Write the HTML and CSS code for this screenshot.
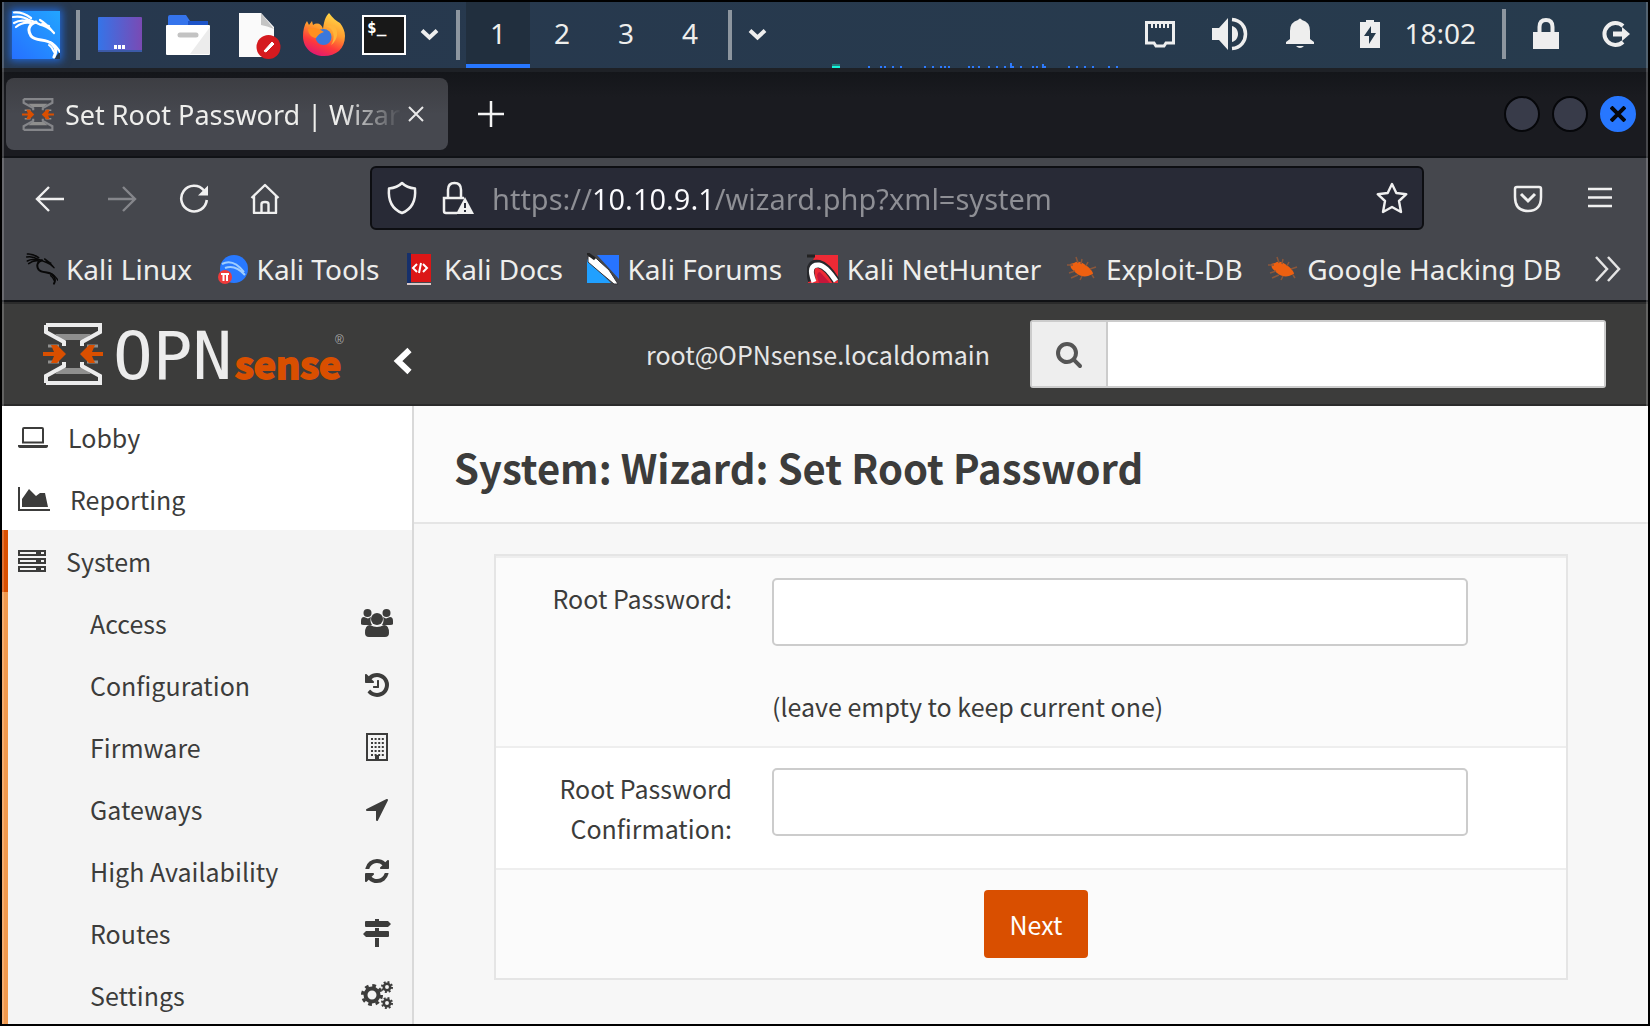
FILE: index.html
```html
<!DOCTYPE html>
<html lang="en">
<head>
<meta charset="utf-8">
<meta name="viewport" content="width=device-width, initial-scale=1">
<title>Set Root Password | Wizard</title>
<link rel="stylesheet" href="styles.css">
</head>
<body>
<div class="screen">

  <!-- Shared symbols -->
  <svg class="defs" aria-hidden="true">
    <symbol id="dragon" viewBox="0 0 48 48">
      <g fill="none" stroke="currentColor" stroke-linecap="round" stroke-linejoin="round">
        <path d="M2 1.500C8 1 13 2.500 19 7M1 6C7 5 13 6 18 10M2 12C7 9 12 9 17 11M4 16C9 12 14 11 19 12" stroke-width="2.200"/>
        <path d="M17 9C22 10 26 13 31 14.500C35 16 39 18 42 22M28 9C33 12 37 16 41 21M30 13L37 15" stroke-width="2.200"/>
        <path d="M24 11C17 13 15 19 19 25C24 31 34 27 40 33C44 37 45 40 42 46" stroke-width="3"/>
        <path d="M38 31C42 33 45 36 48 41M37 34C40 36 41 38 42 41" stroke-width="2"/>
      </g>
    </symbol>
    <symbol id="hourglass" viewBox="0 0 60 62">
      <path d="M12 11H48L41 17H19ZM12 51H48L41 45H19Z" fill="#8f8f8e"/>
      <path d="M3 2H57V9L39 19V23M3 2V9L21 19V23M3 60H57V53L39 43V39M3 60V53L21 43V39" fill="none" stroke="currentColor" stroke-width="4"/>
      <path d="M5 23H16M44 23H55M5 39H16M44 39H55" stroke="#8f8f8e" stroke-width="3"/>
      <path d="M0 29H11L8 22H14L23 31L14 40H8L11 33H0ZM60 29H49L52 22H46L37 31L46 40H52L49 33H60Z" fill="#d94f00"/>
    </symbol>
    <symbol id="bug" viewBox="0 0 32 32">
      <path d="M4 11L8 10C12 7 17 10 21 13C25 16 27 19 27 21L22 23C15 25 9 20 5 15Z" fill="#ee6010"/>
      <path d="M1 12L7 12M10 4L12 10M16 6L15 11M3 20L9 18M5 25L12 22M14 27L16 23M22 9L20 13M30 14L24 16M26 22L28 25" stroke="#8a573b" stroke-width="1.500" fill="none"/>
    </symbol>
  </svg>

  <header class="panel">
    <button class="start" aria-label="Applications"><svg width="48" height="48" viewBox="0 0 48 48"><defs><linearGradient id="kg" x1="0" y1="1" x2="1" y2="0"><stop offset="0" stop-color="#2670ff"/><stop offset="1" stop-color="#22a5ff"/></linearGradient></defs><path d="M0 0H48V40L42 48H0Z" fill="url(#kg)"/><use href="#dragon" color="#fff" width="48" height="48"/></svg></button>
    <span class="divider"></span>
    <nav class="launchers" aria-label="Launchers">
      <button aria-label="Show desktop"><svg width="66" height="48" viewBox="0 0 66 48"><defs><linearGradient id="dg"><stop offset="0" stop-color="#3574e8"/><stop offset="1" stop-color="#7a4ab4"/></linearGradient></defs><rect x="10" y="6" width="44" height="35" rx="1" fill="url(#dg)"/><path d="M10 40H54" stroke="#3c5aa8" stroke-width="2"/><path d="M26 36H38" stroke="#fff" stroke-width="4" stroke-dasharray="3 1"/></svg></button>
      <button aria-label="Files"><svg width="66" height="48" viewBox="0 0 66 48"><path d="M14 6Q14 4 16 4H32L36 10H54V16H14Z" fill="#3574ec"/><path d="M34 10H54V14H34Z" fill="#1d54c8"/><rect x="12" y="14" width="44" height="30" rx="1" fill="#fff"/><path d="M36 43L56 16V43Z" fill="#ececec"/><path d="M26 24H42" stroke="#c3c3c3" stroke-width="5" stroke-linecap="round"/></svg></button>
      <button aria-label="Text editor"><svg width="66" height="48" viewBox="0 0 66 48"><path d="M19 2H41L54 16V46H19Z" fill="#fafafa"/><path d="M41 2L54 18Q47 15 41 14Z" fill="#c4c4c4"/><circle cx="48.500" cy="36" r="12" fill="#d51a1f"/><path d="M44 40L46 41L54 33L52 31Z" fill="#fff" stroke="#fff"/></svg></button>
      <button aria-label="Firefox"><svg width="66" height="48" viewBox="0 0 66 48"><defs><linearGradient id="ff" x1=".8" y1="0" x2=".4" y2="1"><stop offset="0" stop-color="#ffe04b"/><stop offset=".45" stop-color="#ff9a2e"/><stop offset=".75" stop-color="#ff3a3a"/><stop offset="1" stop-color="#e31b6d"/></linearGradient></defs><path d="M43 2C47 7 50 10 54 12C57 16 59 20 59 25C59 38 50 45 38 45C26 45 17 37 17 25C17 20 18 14 21 10L23 14L26 10L27 14C31 11 36 13 37 18C38 9 40 5 43 2Z" fill="url(#ff)"/><circle cx="37.500" cy="26" r="8" fill="#3a78dc"/><path d="M22 18C27 16 32 17 38 21C34 22 32 24 30 27C26 27 22 23 22 18Z" fill="#ff8f1f"/><path d="M40 15C48 17 50 27 45 34C52 29 53 20 48 14Z" fill="#ffb53a"/></svg></button>
      <button aria-label="Terminal"><svg width="66" height="48" viewBox="0 0 66 48"><rect x="11" y="5" width="42" height="38" fill="#181818" stroke="#fff" stroke-width="2"/><text x="15" y="22" class="prompt">$_</text></svg></button>
      <button aria-label="More launchers"><svg width="24" height="48" viewBox="0 0 24 48" fill="none" stroke="#eee" stroke-width="4"><path d="M4 19.500L11.500 26.500L19 19.500"/></svg></button>
    </nav>
    <span class="divider"></span>
    <nav class="workspaces" aria-label="Workspaces">
      <button class="active">1</button><button>2</button><button>3</button><button>4</button>
    </nav>
    <span class="divider"></span>
    <button class="more" aria-label="Window list"><svg width="24" height="48" viewBox="0 0 24 48" fill="none" stroke="#eee" stroke-width="4"><path d="M4 19.500L11.500 26.500L19 19.500"/></svg></button>
    <svg class="graph" width="288" height="10" viewBox="0 0 288 10" aria-hidden="true"><path d="M0 7H8" stroke="#24827f" stroke-width="2"/><path d="M0 9H8" stroke="#15f5dc" stroke-width="2"/><path d="M36 9H38M48 9H50M52 9H54M60 9H62M68 9H70M92 9H94M100 9H102M108 9H110M112 9H114M116 9H118M136 9H138M140 9H142M146 9H148M156 9H158M164 9H166M172 9H174M178 9H182M188 9H190M200 9H202M204 9H206M210 9H214M236 9H238M244 9H246M252 9H254M260 9H262M276 9H278M284 9H286M178 6H180M178 7H180M210 7H212" stroke="#2d7bff" stroke-width="2"/></svg>
    <div class="tray">
      <button aria-label="Network"><svg width="32" height="32" viewBox="0 0 32 32"><path d="M2.500 4.500H29.500V25H22L20 28H12L10 25H2.500Z" fill="none" stroke="#eee" stroke-width="3"/><path d="M8 6V10M12 6V10M16 6V10M20 6V10M24 6V10" stroke="#eee" stroke-width="2"/></svg></button>
      <button aria-label="Volume"><svg width="36" height="32" viewBox="0 0 36 32" fill="#eee"><path d="M0 10H7L16 0V32L7 22H0Z"/><path d="M20 8C28 10 28 22 20 24Z"/><path d="M20 1.500C38 3 38 29 20 30.500" fill="none" stroke="#eee" stroke-width="3.500"/></svg></button>
      <button aria-label="Notifications"><svg width="32" height="32" viewBox="0 0 32 32" fill="#eee"><path d="M14 2Q16-1 18 2Q26 4 26 13V21L30 24V26H2V24L6 21V13Q6 4 14 2ZM12 28H20Q16 32 12 28Z"/></svg></button>
      <button aria-label="Battery"><svg width="32" height="32" viewBox="0 0 32 32"><path d="M12 2H20V4H26V30H6V4H12Z" fill="#eee"/><path d="M17 8L10 18H15V26L22 15H17Z" fill="#263a4b"/></svg></button>
      <time class="clock">18:02</time>
      <span class="divider"></span>
      <button aria-label="Lock screen"><svg width="32" height="32" viewBox="0 0 32 32"><path d="M3 14H29V31H3Z" fill="#eee"/><path d="M9.500 15V9Q9.500 2 16 2T22.500 9V15" fill="none" stroke="#eee" stroke-width="4"/></svg></button>
      <button aria-label="Log out"><svg width="32" height="32" viewBox="0 0 32 32"><path d="M23 8A11 11 0 1 0 23 24" fill="none" stroke="#eee" stroke-width="4"/><path d="M13 13.500H22V9L30 16L22 23V18.500H13Z" fill="#eee"/></svg></button>
    </div>
  </header>

  <div class="tabbar">
    <div class="tab">
      <svg width="32" height="33" viewBox="0 0 60 62" color="#85868a" aria-hidden="true"><use href="#hourglass"/></svg>
      <span class="tab-title">Set Root Password | Wizard</span>
      <button aria-label="Close tab"><svg width="16" height="16" viewBox="0 0 16 16" stroke="#e8e8e8" stroke-width="2"><path d="M1 1L15 15M15 1L1 15"/></svg></button>
    </div>
    <button class="new-tab" aria-label="New tab"><svg width="26" height="26" viewBox="0 0 26 26" stroke="#f4f4f4" stroke-width="2.500"><path d="M13 0V26M0 13H26"/></svg></button>
    <div class="window-buttons">
      <button aria-label="Minimize"></button>
      <button aria-label="Maximize"></button>
      <button class="close" aria-label="Close"><svg width="16" height="16" viewBox="0 0 16 16" stroke="#05070c" stroke-width="4"><path d="M1 1L15 15M15 1L1 15"/></svg></button>
    </div>
  </div>

  <div class="toolbar">
    <button aria-label="Back"><svg width="32" height="32" viewBox="0 0 32 32" fill="none" stroke="#f0f0f0" stroke-width="2.400"><path d="M30 17H3M15 5L3 17L15 29"/></svg></button>
    <button aria-label="Forward" disabled><svg width="32" height="32" viewBox="0 0 32 32" fill="none" stroke="#85868b" stroke-width="2.400"><path d="M2 17H29M17 5L29 17L17 29"/></svg></button>
    <button aria-label="Reload"><svg width="32" height="32" viewBox="0 0 32 32"><path d="M26 8.500A12.800 12.800 0 1 0 28.800 18" fill="none" stroke="#f0f0f0" stroke-width="2.600"/><path d="M30 3.500V13.500H20Z" fill="#f0f0f0"/></svg></button>
    <button aria-label="Home"><svg width="32" height="32" viewBox="0 0 32 32" fill="none" stroke="#f0f0f0" stroke-width="2.400" stroke-linejoin="round"><path d="M1.500 16L15 3L28.500 16M4 14V31H26V14M11.500 31V22Q11.500 20 15 20T18.500 22V31"/></svg></button>
    <div class="urlbar">
      <svg width="32" height="34" viewBox="0 0 32 34" fill="none" stroke="#f0f0f0" stroke-width="2.500" stroke-linejoin="round" aria-hidden="true"><path d="M16 2C20 6 24 7 29 7.500C30 19 26 28 16 32C6 28 2 19 3 7.500C8 7 12 6 16 2Z"/></svg>
      <svg width="32" height="34" viewBox="0 0 32 34" aria-hidden="true"><path d="M15 32H4Q2 32 2 30V17H22M6 17V9Q6 2 12.500 2T19 9V17" fill="none" stroke="#f0f0f0" stroke-width="2.500"/><path d="M23 16L32 33H14Z" fill="#f0f0f0"/><path d="M23 22V27M23 29V31" stroke="#282a36" stroke-width="2"/></svg>
      <input class="url" type="text" aria-label="Address" value="https://10.10.9.1/wizard.php?xml=system">
      <button aria-label="Bookmark this page"><svg width="32" height="32" viewBox="0 0 32 32" fill="none" stroke="#f0f0f0" stroke-width="2.400" stroke-linejoin="round"><path d="M16 2L20.300 11L30.300 12.200L23 19L25 30L16 25L7 30L9 19L1.700 12.200L11.700 11Z"/></svg></button>
    </div>
    <div class="tools">
      <button aria-label="Pocket"><svg width="32" height="32" viewBox="0 0 32 32" fill="none" stroke="#f0f0f0" stroke-width="2.500"><path d="M5 5H27Q29 5 29 7V15Q29 29 16 29T3 15V7Q3 5 5 5Z"/><path d="M9 12L16 19L23 12" stroke-width="3"/></svg></button>
      <button aria-label="Menu"><svg width="32" height="32" viewBox="0 0 32 32" stroke="#f0f0f0" stroke-width="2.500"><path d="M4 7H28M4 15.500H28M4 24H28"/></svg></button>
    </div>
  </div>

  <nav class="bookmarks" aria-label="Bookmarks">
    <a href="#"><svg width="32" height="32" color="#080808"><use href="#dragon"/></svg>Kali Linux</a>
    <a href="#"><svg width="32" height="32" viewBox="0 0 32 32"><circle cx="17" cy="16" r="14" fill="#2879ff"/><path d="M5 11Q16 5 27 19M8 15Q18 11 28 22" fill="none" stroke="#9fceff" stroke-width="2"/><circle cx="8" cy="24" r="7" fill="#ee3b3b"/><path d="M4 21H12M6.500 21V28M10 21V28" stroke="#fff" stroke-width="2"/></svg>Kali Tools</a>
    <a href="#"><svg width="32" height="32" viewBox="0 0 32 32"><path d="M3 1H27V29H3Z" fill="#dc1616"/><path d="M3 0H7V30H3Z" fill="#16306b"/><path d="M3 31H27" stroke="#d8c8c8" stroke-width="2"/><path d="M13 11L9 15L13 19M19 11L23 15L19 19M17 10L15 20" fill="none" stroke="#fff" stroke-width="2"/></svg>Kali Docs</a>
    <a href="#"><svg width="32" height="32" viewBox="0 0 32 32"><path d="M10 2H32V26Z" fill="#2774ff"/><path d="M0 6V30H24Z" fill="#20a0ff"/><path d="M1 3Q8 3 12 8L22 17L31 31L27 31L15 21L1 9Z" fill="#fff" stroke="#34353a" stroke-width="1"/><path d="M0 0L8 6" stroke="#222" stroke-width="3"/></svg>Kali Forums</a>
    <a href="#"><svg width="32" height="32" viewBox="0 0 32 32"><path d="M8 2H31V30H1V22Z" fill="#ee2a35"/><path d="M5 28Q0 9 12 11Q20 13 29 28" fill="none" stroke="#27282c" stroke-width="8"/><path d="M7 29Q0 11 12 12Q19 13 29 28" fill="none" stroke="#fff" stroke-width="5"/><path d="M12 30Q8 19 13 19L23 30Z" fill="#c5163a"/><path d="M0 3L8 3" stroke="#222" stroke-width="3"/></svg>Kali NetHunter</a>
    <a href="#"><svg width="32" height="32"><use href="#bug"/></svg>Exploit-DB</a>
    <a href="#"><svg width="32" height="32"><use href="#bug"/></svg>Google Hacking DB</a>
    <button aria-label="More bookmarks"><svg width="28" height="28" viewBox="0 0 28 28" fill="none" stroke="#e4e4e4" stroke-width="2.500"><path d="M2 2L13 14L2 26M14 2L25 14L14 26"/></svg></button>
  </nav>

  <div class="site">
    <header class="site-header">
      <a class="logo" href="#" aria-label="OPNsense"><svg width="306" height="64" viewBox="0 0 306 64"><use href="#hourglass" color="#ececec" x="0" y="1" width="60" height="62"/><text x="70" y="57" class="logo-opn">OPN</text><text x="192" y="57" class="logo-sense">sense</text><text x="292" y="22" class="logo-mark">®</text></svg></a>
      <button class="collapse" aria-label="Collapse menu"><svg width="20" height="28" viewBox="0 0 20 28" fill="none" stroke="#fff" stroke-width="6"><path d="M16.500 3L5 14L16.500 25"/></svg></button>
      <span class="user">root@OPNsense.localdomain</span>
      <form class="search">
        <label for="q" aria-label="Search"><svg width="28" height="28" viewBox="0 0 1792 1792" fill="#555"><path d="M1216 832q0-185-131.500-316.500t-316.500-131.500-316.500 131.500-131.500 316.500 131.500 316.500 316.500 131.500 316.500-131.500 131.500-316.500zm512 832q0 52-38 90t-90 38q-54 0-90-38l-343-342q-179 124-399 124-143 0-273.500-55.500t-225-150-150-225-55.500-273.500 55.500-273.500 150-225 225-150 273.500-55.500 273.500 55.500 225 150 150 225 55.500 273.500q0 220-124 399l343 343q37 37 37 90z"/></svg></label>
        <input id="q" type="text">
      </form>
    </header>

    <div class="site-body">
      <nav class="sidebar" aria-label="Main menu">
        <a class="item" href="#"><svg width="30" height="28" viewBox="0 0 30 28"><path d="M6 5H24Q25 5 25 6V19.500H5V6Q5 5 6 5Z" fill="none" stroke="currentColor" stroke-width="2"/><path d="M0 22H30V23Q30 25 27 25H3Q0 25 0 23Z" fill="currentColor"/></svg>Lobby</a>
        <a class="item" href="#"><svg width="32" height="28" viewBox="0 0 32 28" fill="currentColor"><path d="M0 2H2V24H32V26H0Z"/><path d="M4 22V14L11 4L18 11L22 8H27L30 22Z"/></svg>Reporting</a>
        <a class="item current" href="#"><svg width="28" height="28" viewBox="0 0 28 28"><path d="M1 4H27V8H1ZM1 12H27V16H1ZM1 20H27V24H1Z" fill="none" stroke="currentColor" stroke-width="2"/><path d="M18 4H23V8H18ZM18 12H23V16H18ZM18 20H23V24H18Z" fill="currentColor"/></svg>System</a>
        <div class="submenu">
          <a href="#">Access<svg width="32" height="28" viewBox="0 0 32 28" fill="currentColor"><circle cx="6.500" cy="4" r="4"/><circle cx="25.500" cy="4" r="4"/><path d="M0 15V12Q0 8 3 8L7 9.500L10 8Q8.500 12 11 16H3Q0 16 0 15ZM32 15V12Q32 8 29 8L25 9.500L22 8Q23.500 12 21 16H29Q32 16 32 15Z"/><circle cx="16" cy="10" r="6"/><path d="M4 24Q4 16 9 16Q16 20 23 16Q28 16 28 24Q28 28 24 28H8Q4 28 4 24Z"/></svg></a>
          <a href="#">Configuration<svg width="28" height="28" viewBox="0 0 1792 1792" fill="currentColor"><path d="M1664 896q0 156-61 298t-164 245-245 164-298 61q-172 0-327-72.500t-264-204.500q-7-10-6.500-22.500t8.500-20.500l137-138q10-9 25-9 16 2 23 12 73 95 179 147t225 52q104 0 198.500-40.500t163.500-109.500 109.500-163.500 40.500-198.500-40.500-198.500-109.500-163.500-163.500-109.500-198.500-40.500q-98 0-188 35.500t-160 101.500l137 138q31 30 14 69-17 40-59 40h-448q-26 0-45-19t-19-45v-448q0-42 40-59 39-17 69 14l130 129q107-101 244.500-156.500t284.500-55.500q156 0 298 61t245 164 164 245 61 298zm-640-288v448q0 14-9 23t-23 9h-320q-14 0-23-9t-9-23v-64q0-14 9-23t23-9h224v-352q0-14 9-23t23-9h64q14 0 23 9t9 23z"/></svg></a>
          <a href="#">Firmware<svg width="28" height="28" viewBox="0 0 28 28"><path d="M4 1H24V27H4Z" fill="none" stroke="currentColor" stroke-width="2"/><path d="M8 6H21M8 10H21M8 14H21M8 18H21M8 22H21" stroke="currentColor" stroke-width="2" stroke-dasharray="2 1.600"/><path d="M12 22H16V27H12Z" fill="currentColor"/></svg></a>
          <a href="#">Gateways<svg width="28" height="28" viewBox="0 0 1792 1792" fill="currentColor"><path d="M1593 349l-640 1280q-17 35-57 35-5 0-15-2-22-5-35.500-22.500t-13.500-39.500v-576h-576q-22 0-39.500-13.500t-22.500-35.500 4-42 29-30l1280-640q13-7 29-7 27 0 45 19 15 14 18.500 34.500t-6.500 39.500z"/></svg></a>
          <a href="#">High Availability<svg width="28" height="28" viewBox="0 0 1792 1792" fill="currentColor"><path d="M1639 1056q0 5-1 7-64 268-268 434.500t-478 166.500q-146 0-282.500-55t-243.500-157l-129 129q-19 19-45 19t-45-19-19-45v-448q0-26 19-45t45-19h448q26 0 45 19t19 45-19 45l-137 137q71 66 161 102t187 36q134 0 250-65t186-179q11-17 53-117 8-23 30-23h192q13 0 22.500 9.500t9.500 22.500zm25-800v448q0 26-19 45t-45 19h-448q-26 0-45-19t-19-45 19-45l138-138q-148-137-349-137-134 0-250 65t-186 179q-11 17-53 117-8 23-30 23h-199q-13 0-22.500-9.500t-9.500-22.500v-7q65-268 270-434.500t480-166.500q146 0 284 55.500t245 156.500l130-129q19-19 45-19t45 19 19 45z"/></svg></a>
          <a href="#">Routes<svg width="28" height="28" viewBox="0 0 28 28" fill="currentColor"><path d="M12 0H16V2H25L28 5L25 8H3Q2 8 2 7V3Q2 2 3 2H12ZM12 9H16V12H25Q26 12 26 13V17Q26 18 25 18H3L0 15L3 12H12ZM12 19H16V28H12Z"/></svg></a>
          <a href="#">Settings<svg width="32" height="28" viewBox="0 0 32 28" fill="none" stroke="currentColor"><circle cx="11" cy="14" r="6.500" stroke-width="4"/><circle cx="11" cy="14" r="9.500" stroke-width="3" stroke-dasharray="3.730"/><circle cx="26" cy="6" r="3.200" stroke-width="2.500"/><circle cx="26" cy="6" r="5" stroke-width="2" stroke-dasharray="1.960"/><circle cx="26" cy="22" r="3.200" stroke-width="2.500"/><circle cx="26" cy="22" r="5" stroke-width="2" stroke-dasharray="1.960"/></svg></a>
        </div>
      </nav>

      <main class="content">
        <div class="title-bar"><h1>System: Wizard: Set Root Password</h1></div>
        <form class="wizard">
          <div class="row">
            <label for="pw">Root Password:</label>
            <div class="field"><input id="pw" type="password"><p>(leave empty to keep current one)</p></div>
          </div>
          <div class="row">
            <label for="pw2">Root Password Confirmation:</label>
            <div class="field"><input id="pw2" type="password"></div>
          </div>
          <div class="actions"><button type="button">Next</button></div>
        </form>
      </main>
    </div>
  </div>
</div>
</body>
</html>
```
FILE: styles.css
```css
* { box-sizing: border-box; }

body {
  margin: 0;
  font-family: "Noto Sans", sans-serif;
  font-size: 28px;
  color: #eeeeec;
  background: #000;
}

button {
  display: flex;
  align-items: center;
  justify-content: center;
  padding: 0;
  border: 0;
  background: none;
  color: inherit;
  font: inherit;
}

a { color: inherit; text-decoration: none; }
svg { flex: none; }
.defs { position: absolute; width: 0; height: 0; }

.screen {
  position: relative;
  display: flex;
  flex-direction: column;
  height: 100vh;
  border: 2px solid #000;
  overflow: hidden;
}

/* faint highlight along both window edges */
.screen::after {
  content: "";
  position: absolute;
  inset: 0;
  border: solid rgba(255, 255, 255, 0.2);
  border-width: 0 2px;
  pointer-events: none;
}

/* Desktop panel */
.panel {
  flex: none;
  display: flex;
  align-items: center;
  height: 66px;
  padding: 0 16px 0 10px;
  background: linear-gradient(90deg, #27384e, #273b4d);
}

.start { box-shadow: 0 0 8px 2px #2268d8; }

.divider {
  flex: none;
  width: 4px;
  height: 50px;
  background: #8d969f;
}

.start + .divider { margin: 0 8px 0 16px; }
.launchers { display: flex; margin-right: 14px; }
.prompt { font: bold 16px "DejaVu Sans Mono", monospace; fill: #fff; }

.workspaces { display: flex; align-self: stretch; margin: 0 6px; }
.workspaces button { width: 64px; border-bottom: 4px solid transparent; }
.workspaces .active { background: #212f3e; border-color: #2777ff; }
.more { margin-left: 14px; }
.graph { align-self: flex-end; margin-left: 62px; }

.tray { display: flex; align-items: center; gap: 38px; margin-left: auto; padding-bottom: 2px; }
.tray button { width: 32px; }
.tray svg { overflow: visible; }
.clock { margin-left: -20px; line-height: 36px; padding-bottom: 2px; }
.tray .divider { margin: 0 -14px 0 -12px; }

/* Browser chrome */
.tabbar {
  flex: none;
  display: flex;
  align-items: center;
  height: 90px;
  padding: 0 12px 0 4px;
  border-top: 4px solid #1e2126;
  border-bottom: 2px solid #101216;
  background: linear-gradient(#14161a, #1a1b20 30%);
}

.tab {
  display: flex;
  align-items: center;
  width: 442px;
  height: 72px;
  padding: 0 24px 0 16px;
  border-radius: 8px;
  background: linear-gradient(#3d3e43, #46484f 50%);
}

.tab-title {
  flex: 1;
  min-width: 0;
  margin: 0 6px 0 11px;
  overflow: hidden;
  white-space: nowrap;
  font-size: 27px;
  mask-image: linear-gradient(90deg, #000 82%, transparent);
}

.new-tab { margin-left: 30px; }
.window-buttons { display: flex; gap: 12px; margin-left: auto; }
.window-buttons button {
  width: 36px;
  height: 36px;
  border: 2px solid #06070a;
  border-radius: 50%;
  background: #383b49;
}
.window-buttons .close { border-color: #2777ff; background: #2777ff; }

.toolbar {
  flex: none;
  display: flex;
  align-items: center;
  gap: 40px;
  height: 80px;
  padding: 0 32px;
  background: #45474d;
}

.urlbar {
  flex: 1;
  display: flex;
  align-items: center;
  height: 64px;
  margin: 0 48px;
  padding: 0 14px;
  border: 2px solid #0d0e12;
  border-radius: 6px;
  background: #282a36;
}

.urlbar > svg + svg { margin: 0 18px 0 24px; }

/* host part of the address is brighter than the rest */
.url {
  flex: 1;
  min-width: 0;
  padding: 0;
  border: 0;
  outline: 0;
  font: inherit;
  font-size: 29px;
  color: transparent;
  background: linear-gradient(90deg, #8e8f95 100px, #fbfbfe 100px 223px, #8e8f95 223px);
  background-clip: text;
}

.tools { display: flex; gap: 40px; }

.bookmarks {
  flex: none;
  display: flex;
  align-items: center;
  justify-content: space-between;
  height: 64px;
  padding: 0 26px 0 24px;
  border-bottom: 2px solid #101114;
  background: #45474d;
}

.bookmarks a { display: flex; align-items: center; gap: 8px; white-space: nowrap; }
.bookmarks button { margin-left: 8px; }

/* Web page */
.site {
  flex: 1;
  display: flex;
  flex-direction: column;
  min-height: 0;
  font-family: "Noto Sans CJK SC", sans-serif;
  font-size: 25px;
  line-height: 40px;
  color: #3c3c3b;
  background: #f7f7f7;
}

.site-header {
  flex: none;
  display: flex;
  align-items: center;
  height: 104px;
  padding: 0 42px 0 41px;
  border-top: 2px solid #2b2b2b;
  border-bottom: 2px solid #2b2b2b;
  background: #3c3c3b;
  color: #e6e6e6;
}

.logo svg { display: block; }
.logo-opn { font: 66px "DejaVu Sans Mono", monospace; fill: #ececec; }
.logo-sense { font: bold 38px "Noto Sans CJK SC", sans-serif; fill: #d94f00; stroke: #d94f00; stroke-width: 2px; }
.logo-mark { font: 12px "Liberation Sans", sans-serif; fill: #aaa; }

.collapse { margin: 14px 0 0 44px; }
.user { margin-left: auto; }

.search {
  display: flex;
  width: 576px;
  height: 68px;
  margin-left: 40px;
  border: 2px solid #ccc;
  border-radius: 3px;
  background: #fff;
}

.search label {
  display: flex;
  align-items: center;
  justify-content: center;
  width: 76px;
  border-right: 2px solid #ccc;
  background: #eee;
}

.search input { flex: 1; min-width: 0; border: 0; outline: 0; font: inherit; }

.site-body { flex: 1; display: flex; min-height: 0; }

.sidebar {
  flex: none;
  width: 412px;
  border-right: 2px solid #d9d9d9;
  background: #fff;
}

.item { display: flex; align-items: center; gap: 20px; height: 62px; padding-left: 16px; }
.item.current { padding-left: 10px; border-left: 6px solid #d94f00; background: #f4f4f4; }

.submenu { border-left: 6px solid #f0994e; background: #f4f4f4; }
.submenu a {
  display: flex;
  align-items: center;
  justify-content: space-between;
  height: 62px;
  padding: 0 19px 0 82px;
}
.submenu svg { width: 32px; }

.content { flex: 1; min-width: 0; }

.title-bar {
  padding: 36px 40px 30px;
  border-bottom: 2px solid #e5e5e5;
  background: #fbfbfb;
}

h1 { margin: 0; font-size: 40px; font-weight: 700; line-height: 50px; }

.wizard {
  margin: 30px 80px;
  border: 2px solid #e5e5e5;
  background: #fbfbfb;
}

.row {
  display: grid;
  grid-template-columns: 236px minmax(0, 696px);
  column-gap: 40px;
  padding: 20px 0;
  border-top: 2px solid #eee;
}
.row:nth-child(2) { background: #fff; }
.row label { padding-left: 20px; text-align: right; }

.field input {
  display: block;
  width: 100%;
  height: 68px;
  padding: 0 20px;
  border: 2px solid #ccc;
  border-radius: 5px;
  background: #fff;
  font: inherit;
}

.field p { margin: 40px 0 0; }

.actions {
  display: flex;
  justify-content: center;
  padding: 20px 0 20px 10px;
  border-top: 2px solid #eee;
}

.actions button {
  width: 104px;
  height: 68px;
  border-radius: 4px;
  background: #d94f00;
  color: #fff;
}
```
